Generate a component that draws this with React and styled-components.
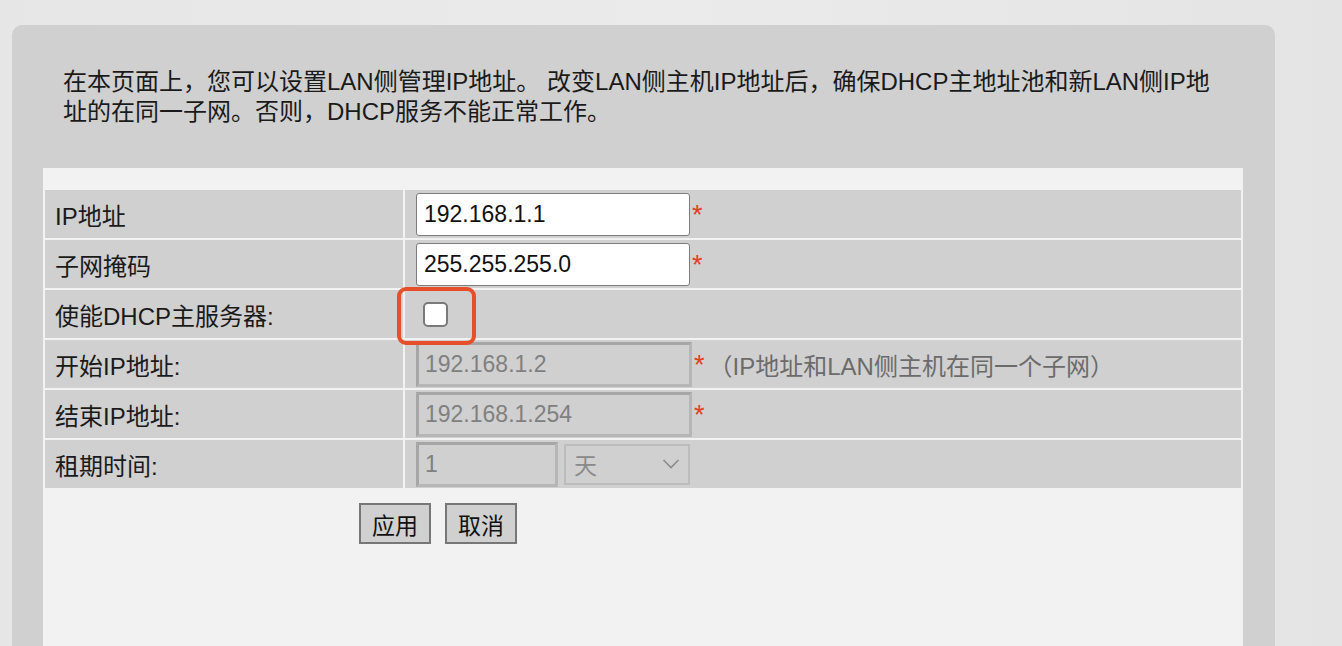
import React from "react";
import styled, { createGlobalStyle } from "styled-components";

const GlobalStyle = createGlobalStyle`
  html, body {
    margin: 0;
    padding: 0;
    height: 100%;
    overflow: hidden;
  }
  body {
    background: #e8e8e8;
    font-family: "Liberation Sans", "Noto Sans CJK SC", sans-serif;
    color: #1a1a1a;
  }
`;

const Page = styled.div`
  height: 646px;
  box-sizing: border-box;
  padding: 25px 67px 0 12px;
  background: linear-gradient(90deg, #e6e6e6 0%, #ebebeb 50%, #e4e4e4 100%);
`;

const Panel = styled.div`
  height: 621px;
  background: #d0d0d0;
  border-radius: 10px 10px 0 0;
  display: flex;
  flex-direction: column;
  box-sizing: border-box;
  padding-top: 42px;
`;

const Intro = styled.p`
  margin: 0 0 41px 51px;
  font-size: 24px;
  line-height: 30px;
  color: #1a1a1a;
  white-space: nowrap;
`;

const FormArea = styled.div`
  flex: 1;
  margin: 0 32px 0 31px;
  background: #f2f2f2;
  padding-top: 20px;
  display: flex;
  flex-direction: column;
`;

const Grid = styled.div`
  display: grid;
  grid-template-columns: 358px 1fr;
  grid-auto-rows: 48px;
  gap: 2px;
  padding: 2px;
`;

const LabelCell = styled.div`
  background: #d0d0d0;
  display: flex;
  align-items: center;
  padding-left: 10px;
  font-size: 24px;
  color: #1a1a1a;
`;

const ValueCell = styled.div`
  position: relative;
  background: #d0d0d0;
  display: flex;
  align-items: center;
  padding-left: 11px;
  font-size: 24px;
`;

const TextInput = styled.input`
  box-sizing: border-box;
  width: ${(p) => p.$w || 274}px;
  height: ${(p) => (p.disabled ? 45 : 43)}px;
  margin: 0;
  padding: 0 0 0 7px;
  font-family: "Liberation Sans", "Noto Sans CJK SC", sans-serif;
  font-size: 23px;
  color: #111;
  background: #fff;
  border: 1px solid #7d7d7d;
  border-radius: 3px;
  outline: none;

  &:disabled {
    background: #d0d0d0;
    color: #808080;
    border-radius: 0;
    border-width: 3px;
    border-style: solid;
    border-color: #a6a6a6 #b6b6b6 #b6b6b6 #a6a6a6;
    padding-left: 6px;
  }
`;

const Star = styled.span`
  color: #e2401c;
  font-size: 27px;
  line-height: 1;
  margin-left: 2px;
  position: relative;
  top: 1px;
`;

const Hint = styled.span`
  color: #6b6b6b;
  font-size: 24px;
  margin-left: 4px;
`;

const Checkbox = styled.span`
  box-sizing: border-box;
  display: inline-block;
  width: 25px;
  height: 25px;
  margin-left: 7px;
  background: #fff;
  border: 2px solid #7a7a7a;
  border-radius: 5px;
`;

const Highlight = styled.span`
  position: absolute;
  z-index: 2;
  left: -8px;
  top: -3px;
  width: 79px;
  height: 58px;
  box-sizing: border-box;
  border: 4px solid #e5502a;
  border-radius: 9px;
  pointer-events: none;
`;

const Select = styled.div`
  box-sizing: border-box;
  width: 126px;
  height: 41px;
  margin-left: 6px;
  border: 2px solid #bcbcbc;
  background: #d0d0d0;
  display: flex;
  align-items: center;
  justify-content: space-between;
  padding: 0 8px 0 8px;
  color: #8a8a8a;
  font-size: 23px;
`;

const ButtonRow = styled.div`
  display: flex;
  gap: 14px;
  padding: 13px 0 0 316px;
`;

const Button = styled.button`
  box-sizing: border-box;
  width: 72px;
  height: 41px;
  padding: 0;
  background: #d0d0d0;
  border: 2px solid #777;
  font-family: "Liberation Sans", "Noto Sans CJK SC", sans-serif;
  font-size: 23px;
  color: #111;
  cursor: pointer;
`;

const Chevron = () => (
  <svg width="18" height="12" viewBox="0 0 18 12" fill="none">
    <polyline points="1.5,2 9,9.5 16.5,2" stroke="#8c8c8c" strokeWidth="1.6" />
  </svg>
);

export default function App() {
  return (
    <>
      <GlobalStyle />
      <Page>
        <Panel>
          <Intro>
            在本页面上，您可以设置LAN侧管理IP地址。 改变LAN侧主机IP地址后，确保DHCP主地址池和新LAN侧IP地
            <br />
            址的在同一子网。否则，DHCP服务不能正常工作。
          </Intro>
          <FormArea>
            <Grid>
              <LabelCell>IP地址</LabelCell>
              <ValueCell>
                <TextInput defaultValue="192.168.1.1" />
                <Star>*</Star>
              </ValueCell>

              <LabelCell>子网掩码</LabelCell>
              <ValueCell>
                <TextInput defaultValue="255.255.255.0" />
                <Star>*</Star>
              </ValueCell>

              <LabelCell>使能DHCP主服务器:</LabelCell>
              <ValueCell>
                <Checkbox />
                <Highlight />
              </ValueCell>

              <LabelCell>开始IP地址:</LabelCell>
              <ValueCell>
                <TextInput disabled $w={276} defaultValue="192.168.1.2" />
                <Star>*</Star>
                <Hint>（IP地址和LAN侧主机在同一个子网）</Hint>
              </ValueCell>

              <LabelCell>结束IP地址:</LabelCell>
              <ValueCell>
                <TextInput disabled $w={276} defaultValue="192.168.1.254" />
                <Star>*</Star>
              </ValueCell>

              <LabelCell>租期时间:</LabelCell>
              <ValueCell>
                <TextInput disabled $w={142} defaultValue="1" />
                <Select>
                  <span>天</span>
                  <Chevron />
                </Select>
              </ValueCell>
            </Grid>
            <ButtonRow>
              <Button>应用</Button>
              <Button>取消</Button>
            </ButtonRow>
          </FormArea>
        </Panel>
      </Page>
    </>
  );
}
